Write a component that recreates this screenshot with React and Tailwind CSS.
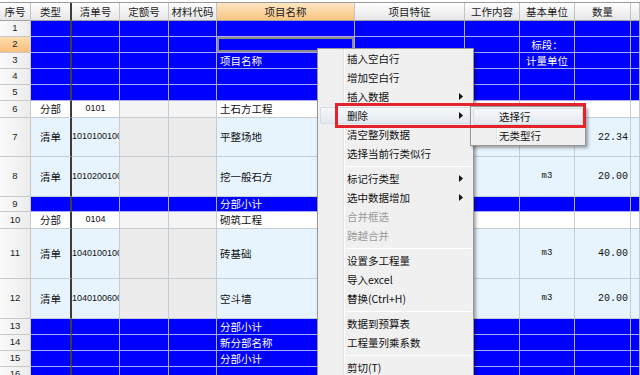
import React from "react";

const COLS = [31, 41, 48, 49, 48, 138, 110, 55, 55, 56, 9];
const HEAD = ["序号", "类型", "清单号", "定额号", "材料代码", "项目名称", "项目特征", "工作内容", "基本单位", "数量", ""];

const ROWS = [
  { n: 1, h: 16, blue: true },
  { n: 2, h: 16, blue: true, sel: true, unit: "标段：" },
  { n: 3, h: 16, blue: true, name: "项目名称", unit: "计量单位" },
  { n: 4, h: 16, blue: true },
  { n: 5, h: 16, blue: true },
  { n: 6, h: 17, white: true, type: "分部", code: "0101", name: "土石方工程" },
  { n: 7, h: 39, type: "清单", code: "10101001001", name: "平整场地", qty: "22.34" },
  { n: 8, h: 40, type: "清单", code: "10102001001", name: "挖一般石方", unit: "m3", qty: "20.00" },
  { n: 9, h: 15, blue: true, name: "分部小计" },
  { n: 10, h: 17, white: true, type: "分部", code: "0104", name: "砌筑工程" },
  { n: 11, h: 50, type: "清单", code: "10401001001", name: "砖基础", unit: "m3", qty: "40.00" },
  { n: 12, h: 40, type: "清单", code: "10401006001", name: "空斗墙", unit: "m3", qty: "20.00" },
  { n: 13, h: 16, blue: true, name: "分部小计" },
  { n: 14, h: 16, blue: true, name: "新分部名称" },
  { n: 15, h: 16, blue: true, name: "分部小计" },
  { n: 16, h: 16, blue: true },
];

const CJK = "font-['Noto_Sans_CJK_SC','Noto_Sans',sans-serif]";
const MONO = "font-['Liberation_Mono','DejaVu_Sans_Mono',monospace]";

function Header() {
  return (
    <div className="flex border-t border-t-[#9a9a9a] mt-[2px] h-[19px]">
      {HEAD.map((t, i) => (
        <div
          key={i}
          style={{ width: COLS[i] }}
          className={
            "shrink-0 flex items-center justify-center overflow-hidden whitespace-nowrap border-b border-b-[#a0a0a0] text-[10.5px] text-[#1a1a1a] " +
            (i === 1 ? "border-r-2 border-r-[#3c3c3c] " : "border-r border-r-[#c4c4c4] ") +
            (i === 5
              ? "bg-gradient-to-b from-[#fde6c4] to-[#f8c580]"
              : "bg-gradient-to-b from-[#ffffff] to-[#e6e6e6]")
          }
        >
          {t}
        </div>
      ))}
    </div>
  );
}

function Row({ r }) {
  const blue = r.blue;
  const bodyBg = blue ? "bg-[#0000fe]" : r.white ? "bg-white" : "bg-[#e8f4fd]";
  const greyBg = blue ? "bg-[#0000fe]" : r.white ? "bg-[#f4f4f4]" : "bg-[#ececec]";
  const line = blue ? "border-[#a9a9f5]" : "border-[#c6ccd4]";
  const txt = blue ? "text-white" : "text-[#111]";
  const cells = [];
  for (let i = 0; i < COLS.length; i++) {
    let cls = "shrink-0 relative flex items-center overflow-hidden whitespace-nowrap border-b ";
    let content = null;
    if (i === 0) {
      cls +=
        "justify-center border-r border-[#c8c8c8] text-[9.5px] text-[#222] font-['Liberation_Sans',sans-serif] " +
        (r.sel ? "bg-gradient-to-b from-[#fddcac] to-[#f9c07a]" : "bg-gradient-to-r from-[#fafafa] to-[#ececec]");
      content = r.n;
    } else {
      cls += line + " " + (i === 1 ? "border-r-2 border-r-[#3c3c3c] " : "border-r ");
      cls += (i === 3 || i === 4 ? greyBg : bodyBg) + " " + txt + " ";
      if (i === 1) {
        cls += "justify-center text-[10.5px] " + CJK;
        content = r.type;
      } else if (i === 2) {
        cls += "[justify-content:safe_center] text-[9px] font-['Liberation_Sans',sans-serif]";
        content = r.code;
      } else if (i === 5) {
        cls += "pl-[3px] text-[10.5px] " + CJK;
        content = r.name;
      } else if (i === 8) {
        cls += "justify-center " + (blue ? "text-[10.5px] " + CJK : "text-[9px] " + MONO);
        content = r.unit;
      } else if (i === 9) {
        cls += "justify-end pr-[2px] text-[10px] " + MONO;
        content = r.qty;
      }
    }
    cells.push(
      <div key={i} style={{ width: COLS[i], height: r.h }} className={cls}>
        {content != null && <span className="shrink-0">{content}</span>}
        {i === 5 && r.sel && (
          <div className="absolute inset-0 border-2 border-[#8c8c8c]" />
        )}
      </div>
    );
  }
  return <div className="flex">{cells}</div>;
}

function Arrow() {
  return (
    <svg width="5" height="7" viewBox="0 0 5 7" className="absolute right-[9px] top-[6px]">
      <path d="M0 0 L4 3.5 L0 7 Z" fill="#111" />
    </svg>
  );
}

function Item({ label, arrow, disabled, hl, sub }) {
  return (
    <div className="relative h-[19px] flex items-center">
      {hl && (
        <div className="absolute left-[2px] right-[2px] top-[1px] bottom-[1px] rounded-[2px] border border-[#d4dbe3] bg-gradient-to-b from-[#f6f8fa] to-[#e4e9ef]" />
      )}
      <span
        className={
          "relative text-[10.5px] " +
          CJK +
          " " +
          (disabled ? "text-[#9a9a9a]" : "text-[#111]") +
          " " +
          (sub ? "pl-[28px]" : "pl-[29px]")
        }
      >
        {label}
      </span>
      {arrow && <Arrow />}
    </div>
  );
}

function Sep() {
  return (
    <div className="h-[6px] flex items-center pl-[28px] pr-[2px]">
      <div className="h-px w-full bg-[#dcdcdc] border-b border-b-white" />
    </div>
  );
}

function Menu() {
  return (
    <div className="absolute left-[317px] top-[48px] w-[157px] bg-[#f0f0f0] border border-[#979797] shadow-[2px_2px_3px_rgba(0,0,0,0.35)]">
      <div className="absolute left-[25px] top-0 bottom-0 w-px bg-[#e2e3e3]" />
      <div className="absolute left-[26px] top-0 bottom-0 w-px bg-white" />
      <div className="relative">
        <Item label="插入空白行" />
        <Item label="增加空白行" />
        <Item label="插入数据" arrow />
        <Item label="删除" arrow hl />
        <Item label="清空整列数据" />
        <Item label="选择当前行类似行" />
        <Sep />
        <Item label="标记行类型" arrow />
        <Item label="选中数据增加" arrow />
        <Item label="合并框选" disabled />
        <Item label="跨越合并" disabled />
        <Sep />
        <Item label="设置多工程量" />
        <Item label="导入excel" />
        <Item label="替换(Ctrl+H)" />
        <Sep />
        <Item label="数据到预算表" />
        <Item label="工程量列乘系数" />
        <Sep />
        <Item label="剪切(T)" />
        <Item label="复制(C)" />
      </div>
    </div>
  );
}

function SubMenu() {
  return (
    <div className="absolute left-[470px] top-[106px] w-[116px] bg-[#f0f0f0] border border-[#979797] shadow-[2px_2px_3px_rgba(0,0,0,0.35)]">
      <div className="absolute left-[25px] top-0 bottom-0 w-px bg-[#e2e3e3]" />
      <div className="absolute left-[26px] top-0 bottom-0 w-px bg-white" />
      <div className="relative">
        <Item label="选择行" hl sub />
        <Item label="无类型行" sub />
      </div>
    </div>
  );
}

export default function App() {
  return (
    <div className={"relative w-[640px] h-[375px] overflow-hidden bg-white " + CJK}>
      <Header />
      {ROWS.map((r) => (
        <Row key={r.n} r={r} />
      ))}
      <Menu />
      <SubMenu />
      <div className="absolute left-[335px] top-[103px] w-[251px] h-[25px] border-[3px] border-[#e3222b]" />
    </div>
  );
}
